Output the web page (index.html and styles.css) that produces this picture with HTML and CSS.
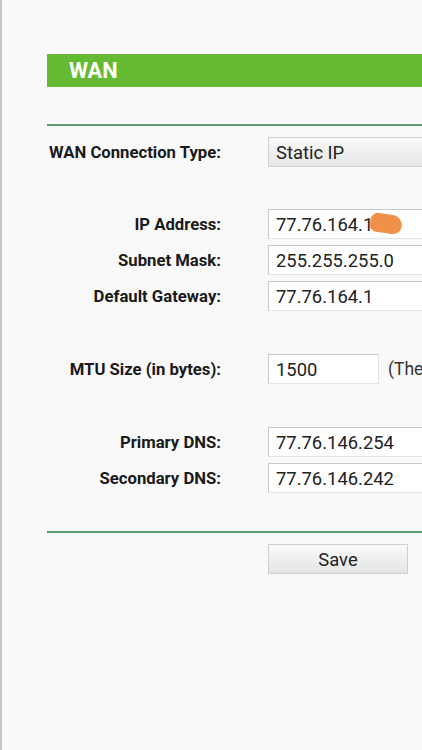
FILE: index.html
```html
<!DOCTYPE html>
<html>
<head>
<meta charset="utf-8">
<link rel="stylesheet" href="styles.css">
</head>
<body>
<div class="page">
  <div class="panel">
    <div class="title">WAN</div>
    <div class="rule rule-top"></div>
    <div class="row row-type">
      <div class="label label-left">WAN Connection Type:</div>
      <div class="select">Static IP</div>
    </div>

    <div class="group group-ip">
      <div class="row">
        <div class="label">IP Address:</div>
        <div class="input wide ip-field">77.76.164.1<span class="blur"></span></div>
      </div>
      <div class="row">
        <div class="label">Subnet Mask:</div>
        <div class="input wide">255.255.255.0</div>
      </div>
      <div class="row">
        <div class="label">Default Gateway:</div>
        <div class="input wide">77.76.164.1</div>
      </div>
    </div>

    <div class="group group-mtu">
      <div class="row">
        <div class="label">MTU Size (in bytes):</div>
        <div class="mtu-cell">
          <div class="input short">1500</div>
          <span class="note">(The</span>
        </div>
      </div>
    </div>

    <div class="group group-dns">
      <div class="row">
        <div class="label">Primary DNS:</div>
        <div class="input wide">77.76.146.254</div>
      </div>
      <div class="row">
        <div class="label">Secondary DNS:</div>
        <div class="input wide">77.76.146.242</div>
      </div>
    </div>

    <div class="rule rule-bottom"></div>
    <div class="row row-save">
      <div class="label"></div>
      <div class="button">Save</div>
    </div>
  </div>
</div>
</body>
</html>
```

FILE: styles.css
```css
html, body {
  margin: 0;
  padding: 0;
  height: 100%;
  overflow: hidden;
}
body {
  background: #f9f9f9;
  font-family: Roboto, "Noto Sans", Arial, sans-serif;
  color: #1a1a1a;
}
.page {
  height: 750px;
  border-left: 2px solid #c6c6c6;
  padding-top: 54px;
  padding-left: 45px;
  box-sizing: border-box;
  overflow: hidden;
}
.panel {
  width: 600px;
}
.title {
  height: 33px;
  background: #66b933;
  color: #fff;
  font-weight: bold;
  font-size: 21.8px;
  line-height: 33px;
  padding-left: 22px;
}
.rule {
  height: 2px;
  background: #5a9f74;
}
.rule-top {
  margin-top: 37px;
}
.row {
  display: grid;
  grid-template-columns: 174px auto;
  column-gap: 47px;
  align-items: center;
  height: 30px;
}
.row + .row {
  margin-top: 6px;
}
.row-type {
  margin-top: 11px;
}
.label {
  font-size: 16.7px;
  font-weight: bold;
  text-align: right;
  color: #1a1a1a;
  white-space: nowrap;
}
.label-left {
  text-align: left;
  padding-left: 2px;
}
.select, .input, .button {
  box-sizing: border-box;
  height: 30px;
  font-size: 18.4px;
  line-height: 29px;
  padding-left: 7px;
  white-space: nowrap;
  color: #222;
}
.select {
  width: 250px;
  border: 1px solid #cfcfcf;
  background: linear-gradient(#fafafa, #e6e6e6);
}
.input {
  background: #fff;
  border-top: 1px solid #c8c8c8;
  border-left: 1px solid #c8c8c8;
  border-right: 1px solid #e4e4e4;
  border-bottom: 1px solid #e4e4e4;
}
.wide {
  width: 250px;
}
.short {
  width: 111px;
}
.ip-field {
  position: relative;
}
.blur {
  position: absolute;
  left: 101px;
  top: 4px;
  width: 32px;
  height: 19px;
  background: #f0914a;
  border-radius: 9px 12px 10px 8px;
  transform: rotate(8deg);
}
.group-ip {
  margin-top: 42px;
}
.group-mtu {
  margin-top: 43px;
}
.group-dns {
  margin-top: 43px;
}
.mtu-cell {
  display: flex;
  align-items: center;
  gap: 9px;
}
.note {
  font-size: 17.5px;
  color: #333;
  white-space: nowrap;
}
.rule-bottom {
  margin-top: 38px;
}
.row-save {
  margin-top: 11px;
}
.button {
  width: 140px;
  padding-left: 0;
  text-align: center;
  border: 1px solid #cfcfcf;
  background: linear-gradient(#fafafa, #e4e4e4);
  color: #222;
}
```
